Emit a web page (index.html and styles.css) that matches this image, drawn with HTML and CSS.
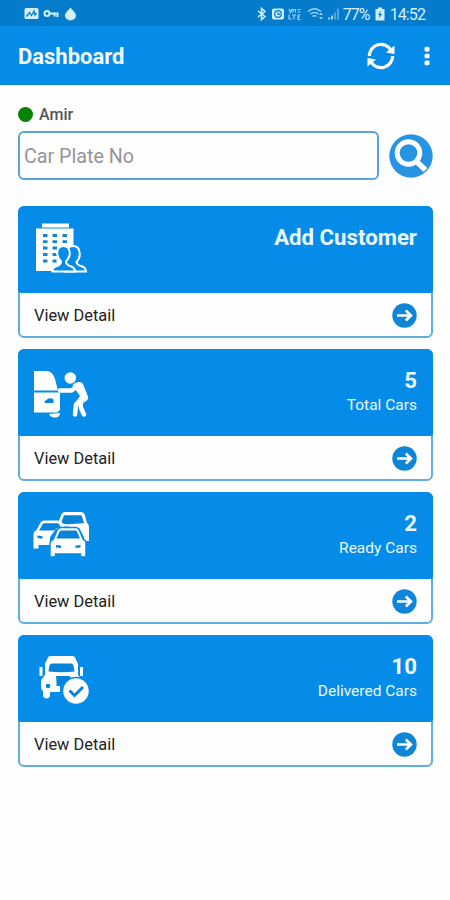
FILE: index.html
```html
<!DOCTYPE HTML>
<html lang="en">
    <head>
        <meta charset="utf-8">
        <title>Dashboard</title>
        <link rel="stylesheet" href="styles.css">
    </head>
    <body>
        <div class="statusbar">
            <svg class="notif" width="54" height="16" viewBox="0 0 54 16">
                <rect x="0.5" y="2" width="14" height="11" rx="1.5"/>
                <path class="cut" d="M2.5 10.5l3-4 2 3 2.500-4.500 1 4 1.500-2"/>
                <path class="line" d="M25.500 7.500h8v3.500M30.500 7.500v3"/>
                <circle class="line" cx="23" cy="7.500" r="2.500"/>
                <path d="M46.500 1.500c1.800 3 5.500 5 5.500 8a5.500 5 0 0 1-11 0c0-3 3.700-5 5.500-8z"/>
            </svg>
            <svg class="system" width="88" height="16" viewBox="0 0 88 16">
                <path class="line mid" d="M3 5l7 5.500-3.500 3V2.500l3.500 3L3 11"/>
                <rect x="17" y="2.500" width="12" height="11" rx="2"/>
                <circle class="cut" cx="23" cy="8" r="3.300"/>
                <path class="cut thin" d="M23 6v2.300h2"/>
                <g class="dim">
                    <path class="line thin" d="M34 3l1.500 3.500L37 3M38 6.500v-3h2.500v3M42.500 3.500h3M42.500 6h3M34 8.500v4.500h3M37 9h4M39 9v4.500M45.500 9H43v4.500h2.500M43 11h2"/>
                    <path class="line mid" d="M53 5.500c4-3.500 9-3.500 13 0M55.500 8c2.500-2 5.500-2 8 0M57.500 10.500c1.300-1 2.700-1 4 0"/>
                    <path d="M64 9l2-2.500L68 9zM64 11h4l-2 2.500zM73 13.500v-2h2v2zM76 13.500V9.500h2v4z"/>
                    <path class="faint" d="M79 13.500V6.500h2v7zM82 13.500v-11h2v11z"/>
                </g>
            </svg>
            <span class="percent">77%</span>
            <svg class="battery" width="10" height="14" viewBox="0 0 10 14">
                <path d="M3 0.500h4v1.500h2.500v11.500h-9V2H3z"/>
                <path class="bolt" d="M5.800 3.500L3 8h1.700l-.7 3.500L7.200 7H5.300z"/>
            </svg>
            <span>14:52</span>
        </div>
        <div class="appbar">
            <h1>Dashboard</h1>
            <svg class="refresh" width="30" height="30" viewBox="0 0 30 30">
                <path class="ring" d="M3.300 15A11.700 11.700 0 0 1 25 9M26.700 15A11.700 11.700 0 0 1 5 21"/>
                <path d="M28.500 4.500v8.500l-8.500-1.500zM1.500 25.500V17l8.500 1.500z"/>
            </svg>
            <svg class="more" width="6" height="20" viewBox="0 0 6 20">
                <rect x="0.500" y="0.800" width="5" height="4.600" rx="1.500"/>
                <rect x="0.500" y="7.700" width="5" height="4.600" rx="1.500"/>
                <rect x="0.500" y="14.600" width="5" height="4.600" rx="1.500"/>
            </svg>
        </div>
        <div class="content">
            <div class="user"><span class="online"></span>Amir</div>
            <div class="search">
                <input type="text" id="plateInput" placeholder="Car Plate No"/>
                <svg width="44" height="44" viewBox="0 0 44 44">
                    <circle class="disc" cx="22" cy="22" r="21.700"/>
                    <circle class="glass" cx="19.500" cy="19" r="11.300"/>
                    <path class="handle" d="M28 28l8.500 8"/>
                </svg>
            </div>

            <div class="card">
                <div class="head">
                    <svg class="icon" width="60" height="60" viewBox="0 0 60 60">
                        <path d="M10 7.500h27v4H10zM4 12.500h37.500V55H4z"/>
                        <path class="windows" d="M11 19.500h4.500M20.500 19.500h4.500M30.500 19.500h4.500M11 25.700h4.500M20.500 25.700h4.500M30.500 25.700h4.500M11 32h4.500M20.500 32h4.500M11 38.500h4.500M20.500 38.500h4.500M11 45h4.500M20.500 45h4"/>
                        <path class="person" d="M32 55.500h22c0-3-2-4.500-5-5.500-3-1-4.500-2-4.500-4 3-3 3.500-6 3.200-9-.3-5-2.700-7-6.700-7-2 0-4 .7-5 2"/>
                        <path class="person" d="M20.500 55.500H43c0-3.500-2-4.500-5-5.500-3-1-4-2-4-4.500 2.500-2.500 4-5 3.800-8.500-.3-4.500-2.300-7-6.300-7s-6.200 2.500-6.300 7c-.1 3.500 1.500 6 3.800 8.500 0 2.500-1 3.500-4 4.500-3.500 1-4.500 2-4.500 5.500z"/>
                    </svg>
                    <div class="info"><b>Add Customer</b></div>
                </div>
                <div class="foot">
                    <span>View Detail</span>
                    <svg class="go" width="25" height="25" viewBox="0 0 25 25"><circle cx="12.500" cy="12.500" r="12.200"/><path d="M5 12.500h14M13.800 7.500l5.200 5-5.200 5"/></svg>
                </div>
            </div>

            <div class="card">
                <div class="head">
                    <svg class="icon" width="60" height="60" viewBox="0 0 60 60">
                        <path d="M2 12h12c5 0 7.500 3 9 8l3 11.500H2zM2 33.500h26v17.500l-3 2.500H2z"/>
                        <path class="dark" d="M12.500 43c0-1.500 2-1.500 3-3 2-1.500 5-.5 6 .5v3.500h-7c-1.500 0-2 0-2-1z"/>
                        <path d="M17 55l11-1c0 3-2 4.500-5 4.500s-5-1-6-3.500z"/>
                        <circle cx="38.300" cy="19" r="5.800"/>
                        <path class="limb" d="M28 31.500h11.500l7-5.500"/>
                        <path d="M40.500 26.500c2.500-4 8.500-4.500 10.500-1.500l5 12.500c.7 2-.5 3.500-2 4.500l-5 3.500-6-1.500 5-7z"/>
                        <path class="limb" d="M51.500 39l-7.500 6.500-1 10M48.500 43l.5 6 3 6.500"/>
                    </svg>
                    <div class="info"><b>5</b><span>Total Cars</span></div>
                </div>
                <div class="foot">
                    <span>View Detail</span>
                    <svg class="go" width="25" height="25" viewBox="0 0 25 25"><circle cx="12.500" cy="12.500" r="12.200"/><path d="M5 12.500h14M13.800 7.500l5.200 5-5.200 5"/></svg>
                </div>
            </div>

            <div class="card">
                <div class="head">
                    <svg class="icon" width="60" height="60" viewBox="0 0 60 60">
                        <path d="M26.500 20l2.500-6.500c.7-2 2-3.500 4-3.500h16c2 0 3.500 1.500 4 3.500l2 7.500c1.500 1.500 2 2.500 2 4v14h-5V35l-5-9-16-2z"/>
                        <path class="dark" d="M29 21l2.500-6.500c.3-.8.800-1.300 1.500-1.300h15.500c.7 0 1.200.5 1.500 1.300l2 6.500c-8 1-15 1.500-19 1z"/>
                        <path d="M4.500 28l3.500-6.500c1-2 2.500-3 4.500-3h13c2.500 0 4 .7 5 2.500l2.500 4.500-9 1.500-6 8v8H6.500v3.500h-5V33c0-2.500 1-4 3-5z"/>
                        <path class="dark" d="M7 28.500l3.500-6c.5-.8 1-1.200 2-1.200h12.500c1 0 1.800.4 2.200 1.200l1.500 2.500-4.500 1.500-1.500 2zM5.500 33.500l5 .7v2.600l-5-.7z"/>
                        <path class="edged" d="M21.500 37l3.500-8.500c.8-2 2-3 4-3h14.500c2 0 3.300 1 4 3L51 37c2 1 3 2.500 3 4.500V55h-5.500v-3h-25v3H18V41.500c0-2 1.500-3.500 3.500-4.500z"/>
                        <path class="dark" d="M24.500 36.500l3-7c.3-.7.800-1 1.500-1h14.500c.7 0 1.200.3 1.500 1l3 7zM24 43l5 .5v2.500l-5-.5zM48.500 43l-5 .5v2.500l5-.5z"/>
                    </svg>
                    <div class="info"><b>2</b><span>Ready Cars</span></div>
                </div>
                <div class="foot">
                    <span>View Detail</span>
                    <svg class="go" width="25" height="25" viewBox="0 0 25 25"><circle cx="12.500" cy="12.500" r="12.200"/><path d="M5 12.500h14M13.800 7.500l5.200 5-5.200 5"/></svg>
                </div>
            </div>

            <div class="card">
                <div class="head">
                    <svg class="icon" width="60" height="60" viewBox="0 0 60 60">
                        <path d="M19 11h21c2 0 3 .7 3.500 2.500L46 19v11l3 4H28v13H18v3.500c0 4-7 4-7 0V46c-1.500-1-2-3-2-5v-6l4-5V19l2.500-5.500c.5-1.800 1.500-2.500 3.500-2.500zM7.500 22h3v9h-3zM48 22h3v9h-3z"/>
                        <path class="dark" d="M20 18.500h19c1.500 0 2.300 1 2.600 2.500l.9 5.500c-8 1-17 1-26 0l.9-5.500c.3-1.500 1-2.500 2.600-2.500zM24 31h13.500l1.500 1.500c-4 2-7 5-8 8.500h-6.500V37z"/>
                        <circle class="dark" cx="16" cy="41" r="2.300"/>
                        <circle class="edged" cx="44" cy="46" r="13.500"/>
                        <path class="check" d="M37.500 45.500l5 5 8.500-8.500"/>
                    </svg>
                    <div class="info"><b>10</b><span>Delivered Cars</span></div>
                </div>
                <div class="foot">
                    <span>View Detail</span>
                    <svg class="go" width="25" height="25" viewBox="0 0 25 25"><circle cx="12.500" cy="12.500" r="12.200"/><path d="M5 12.500h14M13.800 7.500l5.200 5-5.200 5"/></svg>
                </div>
            </div>
        </div>
    </body>
</html>
```
FILE: styles.css
```css
* {
  box-sizing: border-box;
}

body {
  margin: 0;
  background: #fefefe;
  font-family: Roboto, sans-serif;
}

svg {
  display: block;
  flex: none;
  fill: #fff;
}

.statusbar {
  display: flex;
  align-items: center;
  height: 26px;
  padding: 2px 25px 0 24px;
  background: #047bcb;
  color: #d3effc;
  font-size: 16px;
}
.statusbar svg { fill: #d3effc; }
.statusbar .line { fill: none; stroke: #d3effc; stroke-width: 2; }
.statusbar .cut { fill: none; stroke: #047bcb; stroke-width: 1.3; }
.statusbar .thin { stroke-width: 1.2; }
.statusbar .mid { stroke-width: 1.5; }
.statusbar .dim { opacity: .75; }
.statusbar .faint { opacity: .5; }
.statusbar .bolt { fill: #047bcb; }
.statusbar .system { margin-left: auto; }
.statusbar span { letter-spacing: -0.9px; }
.statusbar .battery { margin: 0 5px; }

.appbar {
  display: flex;
  align-items: center;
  height: 59px;
  padding: 1px 20px 0 18px;
  background: #048ce8;
  border-bottom: 1px solid #0380d5;
}
.appbar h1 {
  flex: 1;
  margin: 0;
  padding-top: 2px;
  color: #f2fbff;
  font-size: 22px;
  font-weight: bold;
}
.refresh { margin-right: 28px; }
.ring { fill: none; stroke: #fff; stroke-width: 3.2; }

.content {
  padding: 20px 17px 0 18px;
}

.user {
  display: flex;
  align-items: center;
  gap: 6px;
  height: 18px;
  color: #555;
  font-size: 16px;
  font-weight: 500;
}
.online {
  width: 15px;
  height: 15px;
  border-radius: 50%;
  background: #078207;
}

.search {
  display: flex;
  align-items: center;
  justify-content: space-between;
  height: 49px;
  margin: 8px 0 26px;
}
.search input {
  width: 361px;
  height: 49px;
  padding: 1px 4px 0;
  border: 2px solid #5ba3d6;
  border-radius: 6px;
  background: #fefefe;
  font-family: inherit;
  font-size: 19.7px;
}
.search input::placeholder { color: #959595; }
.disc { fill: #2793e3; }
.glass { fill: none; stroke: #fff; stroke-width: 5; }
.handle { stroke: #fff; stroke-width: 5.5; }

.card {
  height: 132px;
  margin-bottom: 11px;
  border: 2px solid #5eaee0;
  border-radius: 6px;
  background: #fefefe;
}
.head {
  display: flex;
  justify-content: space-between;
  height: 87px;
  margin: -2px -2px 0;
  padding: 10px 16px 0 14px;
  border-radius: 6px 6px 3px 3px;
  background: #048ce8;
}
.info {
  display: flex;
  flex-direction: column;
  align-items: flex-end;
  padding-top: 8px;
  color: #ecf8ff;
}
.info b { font-size: 22.2px; line-height: 26px; }
.info span { font-size: 15.5px; line-height: 25px; }

.foot {
  display: flex;
  align-items: center;
  justify-content: space-between;
  height: 43px;
  padding: 2px 14px 0;
  color: #222;
  font-size: 16.4px;
}
.go { fill: #0f85d8; }
.go path { fill: none; stroke: #fff; stroke-width: 2.6; }

.icon .dark { fill: #0784d9; }
.icon .windows { stroke: #1585cf; stroke-width: 2.8; }
.icon .person { fill: #048ce8; stroke: #fff; stroke-width: 2; }
.icon .limb { fill: none; stroke: #fff; stroke-width: 4.5; stroke-linecap: round; stroke-linejoin: round; }
.icon .edged { stroke: #048ce8; stroke-width: 1.5; }
.icon .check { fill: none; stroke: #0784d9; stroke-width: 3; }
```
